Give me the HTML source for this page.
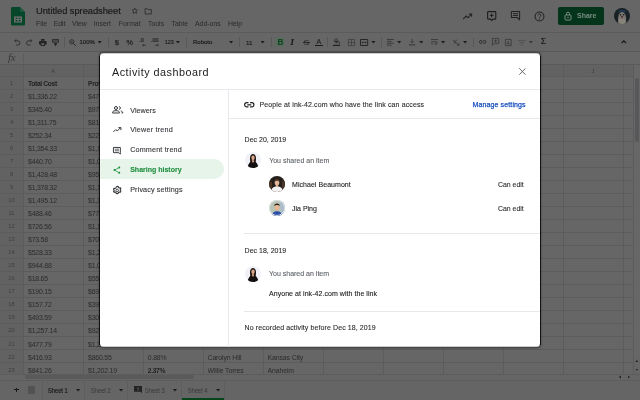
<!DOCTYPE html>
<html lang="en"><head><meta charset="utf-8"><title>Untitled spreadsheet</title>
<style>
*{box-sizing:border-box;margin:0;padding:0}
html,body{width:640px;height:400px;overflow:hidden;background:#666;font-family:"Liberation Sans",sans-serif}
#app{will-change:transform;position:relative;width:640px;height:400px;overflow:hidden;background:#666;color:#222}
.abs{position:absolute}
/* header */
#hdr{position:absolute;left:0;top:0;width:640px;height:32px;background:#666}
#title{position:absolute;left:36px;top:5px;font-size:9.350px;line-height:12px;color:#181818;-webkit-text-stroke:.15px #181818;white-space:nowrap;letter-spacing:-0.05px}
#menu{position:absolute;left:36px;top:18.500px;font-size:6.9px;line-height:10px;color:#2a2a2a;white-space:nowrap}
#menu span{position:absolute;top:0}
#share{position:absolute;left:558px;top:7px;width:46px;height:18px;border-radius:2px;background:#04351b}
#share span{position:absolute;left:19px;top:4px;font-size:7px;line-height:9px;color:#7b8c81;font-weight:bold;letter-spacing:0}
#avatar{position:absolute;left:614px;top:7.600px;width:16px;height:16px;border-radius:50%;overflow:hidden}
/* toolbar */
#tb{position:absolute;left:0;top:32px;width:640px;height:20px;background:#666;box-shadow:inset 0 1px 0 #5b5b5b}
#tb .t{position:absolute;top:5.500px;font-size:6px;line-height:9px;color:#1e1e1e;white-space:nowrap;-webkit-text-stroke:.18px currentColor}
#tb .sep{position:absolute;top:5px;width:1px;height:10px;background:#595959}
#tb .car{position:absolute;top:9px;width:4.200px;height:2.600px;background:#1e1e1e;clip-path:polygon(0 0,100% 0,50% 100%);margin-left:-.2px}
/* formula bar */
#fb{position:absolute;left:0;top:51px;width:640px;height:14px;background:#676767;border-top:1px solid #5a5a5a;border-bottom:1px solid #5a5a5a}
#fb .fx{position:absolute;left:8px;top:-1.500px;font-family:"Liberation Serif",serif;font-style:italic;font-size:11px;line-height:12px;color:#383838;letter-spacing:-.3px}
#fb .sep{position:absolute;left:23px;top:2px;width:1px;height:9px;background:#5c5c5c}
/* grid */
#grid{position:absolute;left:0;top:0;width:640px;height:400px}
#colhead{position:absolute;left:0;top:65px;width:634px;height:12px;background:#626262}
#colhead span{position:absolute;top:0;width:60px;text-align:center;font-size:5.6px;line-height:12px;color:#3c3c3c}
#rowhead{position:absolute;left:0;top:65px;width:23px;height:310px;background:#626262}
#hlines{position:absolute;left:0;top:76px;width:634px;height:300px;background:repeating-linear-gradient(to bottom,#5c5c5c 0,#5c5c5c 1px,transparent 1px,transparent 13px)}
#vlines{position:absolute;left:23px;top:65px;width:611px;height:310px;background:repeating-linear-gradient(to right,#5c5c5c 0,#5c5c5c 1px,transparent 1px,transparent 60px)}
.row{position:absolute;left:0;height:13px;width:640px;font-size:6.900px;letter-spacing:-.2px;line-height:13px;color:#2b2b2b;white-space:nowrap}
.row span{position:absolute;top:0}
.row .rn{left:0;width:23px;text-align:center;font-size:5.800px;letter-spacing:0;color:#3e3e3e}
.row .c{overflow:hidden;width:56px}
.row .ca{left:28px}.row .cb{left:88px}.row .cc{left:147.800px}.row .cd{left:207.500px;letter-spacing:-.1px}.row .ce{left:267.500px;letter-spacing:-.1px}
.row .b{font-weight:bold;color:#222;font-size:6.700px;letter-spacing:-.33px}
/* bottom */
#vscroll{position:absolute;left:633px;top:65px;width:7px;height:310px;background:#676767;border-left:1px solid #5c5c5c}
#vthumb{position:absolute;left:635px;top:77.500px;width:4px;height:64.500px;background:#58585a;border-radius:2px}
#hscroll{position:absolute;left:0;top:374px;width:640px;height:6px;background:#666;border-top:1px solid #5c5c5c}
#hthumb{position:absolute;left:25px;top:375px;width:169px;height:4px;background:#5a5a5c;border-radius:2px}
#bb{position:absolute;left:0;top:380px;width:640px;height:20px;background:#656565;box-shadow:inset 0 1px 0 #5c5c5c}
#bb .tab{position:absolute;top:0;height:20px;font-size:7px;letter-spacing:0;line-height:21.600px;color:#383838;white-space:nowrap;transform:scaleX(.815);transform-origin:0 50%}
#bb .tsep{position:absolute;top:0;width:1px;height:20px;background:#5e5e5e}
#bb .car{position:absolute;top:9px;width:4.200px;height:2.600px;background:#1e1e1e;clip-path:polygon(0 0,100% 0,50% 100%);margin-left:-.2px}
/* dialog */
#shadow{display:none}
#dlg{position:absolute;left:100px;top:53px;width:440px;height:294px;background:#fff;border-radius:3.500px;overflow:hidden;color:#202124;box-shadow:inset 0 .5px 0 rgba(70,70,70,.55),inset 0 -.5px 0 rgba(70,70,70,.55)}
#dlg .h{position:absolute;left:12px;top:12.200px;font-size:10.800px;line-height:14px;color:#202124;letter-spacing:.486px;white-space:nowrap}
#dlg .hl{position:absolute;background:#e6e8eb;height:1px}
#dlg .vl{position:absolute;background:#e6e8eb;width:1px}
#dlg .nav{position:absolute;left:30.200px;font-size:7.200px;line-height:10px;color:#303336;white-space:nowrap;-webkit-text-stroke:.1px currentColor}
#dlg .pill{position:absolute;left:0;top:106.400px;width:124.200px;height:19.800px;background:#e6f4ea;border-radius:0 10px 10px 0}
#dlg .tx{position:absolute;font-size:7px;line-height:10px;color:#2a2c2f;white-space:nowrap;-webkit-text-stroke:.1px currentColor}
#dlg .av{position:absolute;width:16px;height:16px;border-radius:50%;overflow:hidden}
svg{display:block;overflow:visible}
#dshadow{position:absolute;left:100px;top:53px;width:440px;height:294px;border-radius:3.500px;box-shadow:0 .3px 2px .6px rgba(0,0,0,.42)}
#dsl,#dsr{position:absolute;top:55.500px;height:289px;width:.9px;background:rgba(0,0,0,.72)}
#dsl{left:99.200px}#dsr{left:540px}

</style></head>
<body>
<div id="app">
<div id="hdr">
<svg class="abs" style="left:11px;top:6.700px" width="14" height="18.400" viewBox="0 0 14 18.400"><path d="M1.200 0H9l5 5v12.200a1.200 1.200 0 0 1-1.200 1.200H1.200A1.200 1.200 0 0 1 0 17.200V1.200A1.200 1.200 0 0 1 1.200 0z" fill="#06472a"/><path d="M9 0l5 5H10.200A1.200 1.200 0 0 1 9 3.800z" fill="#1d5a3c"/><path d="M3 9.400h8v6.200H3z" fill="#6c6c6c"/><path d="M4.600 10.700h1.700v1.300H4.600zM7.700 10.700h1.700v1.300H7.700zM4.600 13.100h1.700v1.300H4.600zM7.700 13.100h1.700v1.300H7.700z" fill="#06472a"/></svg>
<div id="title">Untitled spreadsheet</div>
<svg class="abs" style="left:131.200px;top:7.300px" width="7.600" height="7.600" viewBox="0 0 24 24"><path d="M12 3.500l2.600 5.600 6.100.700-4.500 4.200 1.200 6-5.400-3-5.400 3 1.200-6-4.500-4.200 6.100-.700z" fill="none" stroke="#2b2b2b" stroke-width="2.600" stroke-linejoin="round"/></svg>
<svg class="abs" style="left:143.800px;top:6.800px" width="8.400" height="8.400" viewBox="0 0 24 24"><path d="M3 5h7l2 2.500h9V20H3z" fill="none" stroke="#2b2b2b" stroke-width="2.400" stroke-linejoin="round"/></svg>
<div id="menu"><span style="left:0">File</span><span style="left:17.700px">Edit</span><span style="left:36px">View</span><span style="left:57.700px">Insert</span><span style="left:82.800px">Format</span><span style="left:112px">Tools</span><span style="left:135.500px">Table</span><span style="left:159px">Add-ons</span><span style="left:192px">Help</span></div>
<!-- right icons -->
<svg class="abs" style="left:462px;top:11px" width="11" height="11" viewBox="0 0 24 24"><path d="M2.500 17.500l6.500-6.500 4 4 7.500-8M15 6.500h6v6" fill="none" stroke="#222" stroke-width="2.200"/></svg>
<svg class="abs" style="left:486.800px;top:10.800px" width="9.400" height="10.400" viewBox="0 0 18.800 20.800"><path d="M2.500 1.200h13.800a1.300 1.300 0 0 1 1.300 1.300v12.500a1.300 1.300 0 0 1-1.300 1.300h-4.400l-2.500 3-2.500-3H2.500a1.300 1.300 0 0 1-1.300-1.300V2.500a1.300 1.300 0 0 1 1.300-1.300z" fill="none" stroke="#1e1e1e" stroke-width="2.200" stroke-linejoin="round"/><path d="M9.400 5v7.400M5.700 8.700h7.400" stroke="#1e1e1e" stroke-width="2"/></svg>
<svg class="abs" style="left:510px;top:10.200px" width="11" height="11" viewBox="0 0 24 24"><path d="M3 3.500h18v13H21v5l-5-5H3z" fill="none" stroke="#222" stroke-width="2.200" stroke-linejoin="round"/><path d="M6.500 8h11M6.500 12h11" stroke="#222" stroke-width="2"/></svg>
<svg class="abs" style="left:534.100px;top:10.500px" width="11" height="11" viewBox="0 0 24 24"><circle cx="12" cy="12" r="9.700" fill="none" stroke="#222" stroke-width="2.300"/><path d="M9 9.500a3 3 0 1 1 4.500 2.600c-1 .600-1.500 1.200-1.500 2.400" fill="none" stroke="#222" stroke-width="2"/><circle cx="12" cy="17.500" r="1.300" fill="#222"/></svg>
<div id="share"><svg class="abs" style="left:5.500px;top:4px" width="8" height="10" viewBox="0 0 16 20"><rect x="2" y="8" width="12" height="10" rx="1.500" fill="none" stroke="#7b8c81" stroke-width="2"/><path d="M5 8V5.500a3 3 0 0 1 6 0V8" fill="none" stroke="#7b8c81" stroke-width="2"/><circle cx="8" cy="13" r="1.500" fill="#7b8c81"/></svg><span>Share</span></div>
<div id="avatar"><svg width="16" height="16" viewBox="0 0 16 16"><rect width="16" height="16" fill="#1a2226"/><path d="M3.800 4.300C5 1.200 11.400 1.200 12.400 4.300 10 3.200 6 3.200 3.800 4.300z" fill="#1f3f66"/><path d="M4.300 16C3.500 9 4.500 4 8 4s4.800 5 3.900 12z" fill="#77756f"/><ellipse cx="8" cy="13" rx="3.300" ry="3.500" fill="#86837a"/><circle cx="6.500" cy="6.700" r=".75" fill="#1a1a1a"/><circle cx="9.600" cy="6.700" r=".75" fill="#1a1a1a"/><ellipse cx="8" cy="8.300" rx=".8" ry=".6" fill="#222"/><ellipse cx="8.100" cy="9.800" rx=".8" ry="1.100" fill="#7a3540"/></svg></div>
</div>
<div id="tb">
<!-- undo redo print paint -->
<svg class="abs" style="left:13.500px;top:6.500px" width="6.500" height="7" viewBox="0 0 13 14"><path d="M4.500 0.500L1.500 3.500 4.500 6.500" fill="none" stroke="#262626" stroke-width="1.600"/><path d="M2 3.500h5.500a4.300 4.300 0 0 1 0 8.600H4" fill="none" stroke="#262626" stroke-width="1.600"/></svg>
<svg class="abs" style="left:26px;top:6.500px" width="6.500" height="7" viewBox="0 0 13 14"><path d="M8.500 0.500l3 3-3 3" fill="none" stroke="#262626" stroke-width="1.600"/><path d="M11 3.500H5.500a4.300 4.300 0 0 0 0 8.600H9" fill="none" stroke="#262626" stroke-width="1.600"/></svg>
<svg class="abs" style="left:38.800px;top:6.500px" width="7.600" height="7" viewBox="0 0 15.200 14"><path d="M4 0h7.200v3.500H4zM1.500 4h12.200a1.500 1.500 0 0 1 1.500 1.500v5.500h-3v3H3v-3H0V5.500A1.500 1.500 0 0 1 1.500 4z" fill="#242424"/><rect x="5" y="8.500" width="5.200" height="3.500" fill="#666"/></svg>
<svg class="abs" style="left:52px;top:6.500px" width="7" height="7.200" viewBox="0 0 14 14.400"><path d="M1 1h12v5.500H1z" fill="none" stroke="#262626" stroke-width="1.700"/><path d="M1 3.700h12" stroke="#262626" stroke-width="1.300"/><path d="M4.500 8h5v2.500L7 14.400 4.500 10.500z" fill="#262626"/></svg>
<div class="sep" style="left:64px"></div>
<svg class="abs" style="left:69px;top:6.500px" width="7.200" height="7.200" viewBox="0 0 14.400 14.400"><circle cx="5.500" cy="5.500" r="4.300" fill="none" stroke="#262626" stroke-width="1.600"/><path d="M8.800 8.800l5 5" stroke="#262626" stroke-width="1.900"/><path d="M3.500 5.500h4M5.500 3.500v4" stroke="#262626" stroke-width="1.100"/></svg>
<div class="t" style="left:79.500px">100%</div><div class="car" style="left:97.800px"></div>
<div class="sep" style="left:108px"></div>
<div class="t" style="left:114.800px;font-size:7.600px">$</div>
<div class="t" style="left:126.500px;font-size:7.200px">%</div>
<div class="t" style="left:139.300px;font-size:5.400px;top:3.500px">.0</div><svg class="abs" style="left:141.500px;top:12px" width="4" height="2.400" viewBox="0 0 8 4.800"><path d="M8 2.400H1.500M3.500 .4L1.200 2.400l2.300 2" fill="none" stroke="#222" stroke-width="1.300"/></svg>
<div class="t" style="left:151px;font-size:5.400px;top:3.500px">.00</div><svg class="abs" style="left:154.500px;top:12px" width="4" height="2.400" viewBox="0 0 8 4.800"><path d="M0 2.400h6.500M4.500 .4l2.300 2-2.300 2" fill="none" stroke="#222" stroke-width="1.300"/></svg>
<div class="t" style="left:164.800px;font-size:5.400px">123</div><div class="car" style="left:176px"></div>
<div class="sep" style="left:186px"></div>
<div class="t" style="left:193px">Roboto</div><div class="car" style="left:229.200px"></div>
<div class="sep" style="left:239px"></div>
<div class="t" style="left:246px;font-size:6.200px">11</div><div class="car" style="left:260.700px"></div>
<div class="sep" style="left:270.500px"></div>
<div class="abs" style="left:274.400px;top:4.500px;width:11px;height:10.700px;border-radius:1.500px;background:#5e695f"></div>
<div class="t" style="left:277.500px;top:5.500px;font-size:8.200px;font-weight:bold;color:#0b4a20">B</div>
<div class="t" style="left:290.500px;top:5.500px;font-size:8.600px;font-style:italic;font-family:'Liberation Serif',serif;font-weight:bold;color:#1c1c1c">I</div>
<div class="t" style="left:303.800px;top:5.500px;font-size:8px;color:#2c2c2c">S</div><div class="abs" style="left:303px;top:9.800px;width:7px;height:0.900px;background:#262626"></div>
<div class="t" style="left:316.500px;top:4.800px;font-size:7px;color:#222">A</div><div class="abs" style="left:315.200px;top:13px;width:7.700px;height:1.200px;background:#1a1a1a"></div>
<div class="sep" style="left:327px"></div>
<svg class="abs" style="left:333px;top:6.200px" width="7.200" height="8" viewBox="0 0 14.400 16"><path d="M6 0.800l5 5-4.200 4.200-4.800-4.800z" fill="none" stroke="#262626" stroke-width="1.500" stroke-linejoin="round"/><path d="M2.500 5.500h8.300l-4 4.500z" fill="#262626"/><path d="M12.800 7.500c.9 1.300 1.400 2 1.400 2.700a1.400 1.400 0 0 1-2.800 0c0-.700.500-1.400 1.400-2.700z" fill="#262626"/><rect x="0" y="13.600" width="14.400" height="2.200" fill="#1a1a1a"/></svg>
<svg class="abs" style="left:347.500px;top:6.500px" width="7" height="7" viewBox="0 0 14 14"><path d="M.8.800h12.400v12.400H.8zM.8 7h12.400M7 .8v12.400" fill="none" stroke="#3a3a3a" stroke-width="1.400"/></svg>
<svg class="abs" style="left:359.800px;top:6.500px" width="8.200" height="7" viewBox="0 0 16.400 14"><path d="M1 1h14.400v12H1z" fill="none" stroke="#222" stroke-width="1.900"/><path d="M4 7h8.400M5.700 5.200L3.900 7l1.800 1.800M10.700 5.200l1.800 1.800-1.800 1.800" fill="none" stroke="#222" stroke-width="1.300"/></svg>
<div class="car" style="left:371.500px"></div>
<div class="sep" style="left:381px"></div>
<svg class="abs" style="left:386.500px;top:7px" width="6.800" height="6.600" viewBox="0 0 13.600 13.200"><path d="M0 .9h13.600M0 4.700h9M0 8.500h13.600M0 12.300h9" stroke="#303030" stroke-width="1.600"/></svg>
<div class="car" style="left:397.300px"></div>
<svg class="abs" style="left:409px;top:6.800px" width="6.200" height="6.400" viewBox="0 0 12.400 12.800"><path d="M6.200 0v7.500M3.200 4.700l3 3 3-3" fill="none" stroke="#303030" stroke-width="1.500"/><path d="M0 11.800h12.400" stroke="#262626" stroke-width="1.600"/></svg>
<div class="car" style="left:419.400px"></div>
<svg class="abs" style="left:430.600px;top:7.300px" width="7" height="6" viewBox="0 0 14 12"><path d="M0 1h14M0 9.800h4M0 5.400h10.500a2.200 2.200 0 0 1 0 4.400H8" fill="none" stroke="#303030" stroke-width="1.500"/><path d="M9 7.800L6.800 9.800 9 11.800z" fill="#303030"/></svg>
<div class="car" style="left:441.200px"></div>
<svg class="abs" style="left:453px;top:6.800px" width="6.500" height="6.800" viewBox="0 0 13 13.600"><path d="M.8 1.500l3 7 3-7" fill="none" stroke="#303030" stroke-width="1.600"/><path d="M6 7.500l5.500 4.500M12 8.500v4H8" fill="none" stroke="#303030" stroke-width="1.500"/></svg>
<div class="car" style="left:463.200px"></div>
<div class="sep" style="left:473px"></div>
<svg class="abs" style="left:478.700px;top:8px" width="7.400" height="3.800" viewBox="0 0 14.800 7.600"><path d="M6 .9H3.800a2.900 2.900 0 0 0 0 5.800H6M8.800 .9H11a2.900 2.900 0 0 1 0 5.800H8.800M4.500 3.800h5.800" fill="none" stroke="#262626" stroke-width="1.500"/></svg>
<svg class="abs" style="left:492px;top:6.200px" width="7.200" height="7.400" viewBox="0 0 14.400 14.800"><path d="M.8.800h12.800v10.500H4.300L.8 14.500z" fill="none" stroke="#303030" stroke-width="1.400" stroke-linejoin="round"/><path d="M7.200 3v6.200M4.100 6.100h6.200" stroke="#303030" stroke-width="1.400"/></svg>
<svg class="abs" style="left:505.200px;top:6.500px" width="6.600" height="7" viewBox="0 0 13.200 14"><path d="M.8.800h11.600v12.400H.8z" fill="none" stroke="#303030" stroke-width="1.400"/><path d="M4.300 10.500V6.500M6.600 10.500V3.500M8.900 10.500V8" stroke="#303030" stroke-width="1.300"/></svg>
<svg class="abs" style="left:518px;top:7.500px" width="7.600" height="5.400" viewBox="0 0 15.200 10.800"><path d="M0 1h15.200M3 5.400h9.200M6 9.800h3.200" stroke="#505050" stroke-width="1.900"/></svg>
<div class="car" style="left:529px;background:#3a3a3a"></div>
<div class="t" style="left:540.800px;top:5px;font-size:8.400px;color:#1a1a1a">Σ</div>
<svg class="abs" style="left:620.500px;top:7.500px" width="5.600" height="3.600" viewBox="0 0 11.200 7.200"><path d="M1 6.300l4.600-4.600 4.600 4.600" fill="none" stroke="#161616" stroke-width="2.500"/></svg>
</div>
<div id="fb"><span class="fx">fx</span><div class="sep"></div></div>

<div id="grid">
<div id="colhead"><span style="left:23px">A</span><span style="left:563px">J</span></div>
<div id="rowhead"></div>
<div id="hlines"></div>
<div id="vlines"></div>
<div class="row" style="top:77.0px"><span class="rn">1</span><span class="c ca b">Total Cost</span><span class="c cb b">Profit</span></div>
<div class="row" style="top:90.03px"><span class="rn">2</span><span class="c ca">$1,336.22</span><span class="c cb">$475.20</span></div>
<div class="row" style="top:103.05px"><span class="rn">3</span><span class="c ca">$345.40</span><span class="c cb">$975.10</span></div>
<div class="row" style="top:116.08px"><span class="rn">4</span><span class="c ca">$1,311.75</span><span class="c cb">$815.33</span></div>
<div class="row" style="top:129.1px"><span class="rn">5</span><span class="c ca">$252.34</span><span class="c cb">$225.48</span></div>
<div class="row" style="top:142.13px"><span class="rn">6</span><span class="c ca">$1,354.33</span><span class="c cb">$1,154.20</span></div>
<div class="row" style="top:155.16px"><span class="rn">7</span><span class="c ca">$440.70</span><span class="c cb">$1,045.11</span></div>
<div class="row" style="top:168.18px"><span class="rn">8</span><span class="c ca">$1,428.48</span><span class="c cb">$955.70</span></div>
<div class="row" style="top:181.21px"><span class="rn">9</span><span class="c ca">$1,378.32</span><span class="c cb">$1,132.40</span></div>
<div class="row" style="top:194.23px"><span class="rn">10</span><span class="c ca">$1,495.12</span><span class="c cb">$1,325.16</span></div>
<div class="row" style="top:207.26px"><span class="rn">11</span><span class="c ca">$488.46</span><span class="c cb">$775.25</span></div>
<div class="row" style="top:220.29px"><span class="rn">12</span><span class="c ca">$726.56</span><span class="c cb">$1,184.30</span></div>
<div class="row" style="top:233.31px"><span class="rn">13</span><span class="c ca">$73.58</span><span class="c cb">$705.12</span></div>
<div class="row" style="top:246.34px"><span class="rn">14</span><span class="c ca">$528.33</span><span class="c cb">$1,245.60</span></div>
<div class="row" style="top:259.36px"><span class="rn">15</span><span class="c ca">$944.88</span><span class="c cb">$1,048.22</span></div>
<div class="row" style="top:272.39px"><span class="rn">16</span><span class="c ca">$18.65</span><span class="c cb">$555.91</span></div>
<div class="row" style="top:285.42px"><span class="rn">17</span><span class="c ca">$190.15</span><span class="c cb">$695.34</span></div>
<div class="row" style="top:298.44px"><span class="rn">18</span><span class="c ca">$157.72</span><span class="c cb">$395.18</span></div>
<div class="row" style="top:311.47px"><span class="rn">19</span><span class="c ca">$493.59</span><span class="c cb">$305.77</span></div>
<div class="row" style="top:324.49px"><span class="rn">20</span><span class="c ca">$1,257.14</span><span class="c cb">$925.46</span></div>
<div class="row" style="top:337.52px"><span class="rn">21</span><span class="c ca">$477.79</span><span class="c cb">$1,250.31</span></div>
<div class="row" style="top:350.55px"><span class="rn">22</span><span class="c ca">$416.93</span><span class="c cb">$860.55</span><span class="c cc">0.88%</span><span class="c cd">Carolyn Hill</span><span class="c ce">Kansas City</span></div>
<div class="row" style="top:363.57px"><span class="rn">23</span><span class="c ca">$841.26</span><span class="c cb">$1,202.19</span><span class="c cc b">2.37%</span><span class="c cd">Willie Torres</span><span class="c ce">Anaheim</span></div>
</div>
<div id="vscroll"></div><div id="vthumb"></div>
<div class="abs" style="left:633px;top:357px;width:7px;height:17px;background:#666;border-left:1px solid #5c5c5c"></div>
<div class="abs" style="left:635.200px;top:360px;width:3.400px;height:2.200px;background:#262626;clip-path:polygon(0 100%,100% 100%,50% 0)"></div>
<div class="abs" style="left:635.200px;top:368.600px;width:3.400px;height:2.200px;background:#262626;clip-path:polygon(0 0,100% 0,50% 100%)"></div>
<div id="hscroll"></div><div id="hthumb"></div>
<div class="abs" style="left:618.800px;top:375.400px;width:2.200px;height:3.400px;background:#262626;clip-path:polygon(100% 0,100% 100%,0 50%)"></div>
<div class="abs" style="left:627.800px;top:375.400px;width:2.200px;height:3.400px;background:#262626;clip-path:polygon(0 0,0 100%,100% 50%)"></div>
<div id="bb">
<div class="abs" style="left:14.300px;top:9.200px;width:4.400px;height:1px;background:#1a1a1a"></div><div class="abs" style="left:16px;top:7.500px;width:1px;height:4.400px;background:#1a1a1a"></div>
<div class="abs" style="left:28px;top:6px;width:7.200px;height:7.800px;background:#525252"></div>
<div class="tsep" style="left:41.800px"></div>
<div class="tab" style="left:48px;color:#1a1a1a;-webkit-text-stroke:.2px #1a1a1a">Sheet 1</div><div class="car" style="left:76.200px"></div>
<div class="tsep" style="left:83.800px"></div>
<div class="tab" style="left:91px">Sheet 2</div><div class="car" style="left:119.200px"></div>
<div class="tsep" style="left:126.800px"></div>
<svg class="abs" style="left:134px;top:6.400px" width="8" height="7.300" viewBox="0 0 16 14.600"><path d="M0 0h16v14.600l-3-3H0z" fill="#232323"/><path d="M6.800 4.200l1.600-1v5.600" fill="none" stroke="#777" stroke-width="1.300"/></svg>
<div class="tab" style="left:145px">Sheet 3</div><div class="car" style="left:173px"></div>
<div class="tsep" style="left:181px"></div>
<div class="tab" style="left:187.500px;letter-spacing:-.03px">Sheet 4</div><div class="car" style="left:216.200px"></div>
<div class="tsep" style="left:223.600px"></div>
<div class="abs" style="left:181.500px;top:17.800px;width:42.200px;height:2.200px;background:#06451a"></div>
</div>

<div id="dshadow"></div><div id="dsl"></div><div id="dsr"></div>
<div id="dlg">
<div class="h">Activity dashboard</div>
<svg class="abs" style="left:418.700px;top:15px" width="6.800" height="7" viewBox="0 0 6.800 7"><path d="M.3.300l6.200 6.400M6.500.300L.3 6.700" stroke="#5f6368" stroke-width=".95"/></svg>
<div class="hl" style="left:0;top:36px;width:440px"></div>
<div class="vl" style="left:128px;top:37px;height:257px"></div>
<div class="pill"></div>
<!-- nav icons -->
<svg class="abs" style="left:12.200px;top:53.300px" width="11.200" height="7.600" viewBox="0 0 22.400 15.200"><circle cx="8" cy="4" r="3" fill="none" stroke="#303336" stroke-width="2"/><path d="M1 14v-1.200c0-2.300 4-3.500 7-3.500s7 1.200 7 3.500V14z" fill="none" stroke="#303336" stroke-width="2" stroke-linejoin="round"/><path d="M14.500 1.100a3 3 0 0 1 0 5.800M17.500 9.800c2 .600 3.900 1.600 3.900 3V14H19" fill="none" stroke="#303336" stroke-width="2"/></svg>
<svg class="abs" style="left:12.800px;top:74px" width="8.400" height="5.600" viewBox="0 0 16.800 11.200"><path d="M.8 9.800l4.700-4.700 3 3 6.500-6.700M10.800 1.200h5v5" fill="none" stroke="#303336" stroke-width="1.900"/></svg>
<svg class="abs" style="left:13px;top:93.600px" width="7.800" height="7.600" viewBox="0 0 15.600 15.200"><path d="M.9.900h13.800v10.400v3l-3-3H.9z" fill="none" stroke="#303336" stroke-width="1.900" stroke-linejoin="round"/><path d="M3.600 4.400h8.400M3.600 7.600h8.400" stroke="#303336" stroke-width="1.500"/></svg>
<svg class="abs" style="left:13.300px;top:112.600px" width="7.800" height="8.200" viewBox="0 0 15.600 16.400"><circle cx="12.500" cy="3" r="2" fill="#1e8e3e"/><circle cx="3" cy="8.200" r="2" fill="#1e8e3e"/><circle cx="12.500" cy="13.400" r="2" fill="#1e8e3e"/><path d="M12.500 3L3 8.200l9.500 5.200" fill="none" stroke="#1e8e3e" stroke-width="1.500"/></svg>
<svg class="abs" style="left:12.900px;top:132.800px" width="8.400" height="8.400" viewBox="0.800 0.800 18.400 18.400"><path d="M10 1.500l2 .3.800 2.300 1.700 1 2.400-.5 1.300 2-1.500 1.900v2l1.500 1.900-1.300 2-2.400-.5-1.700 1-.8 2.300-2 .3-2-.3-.8-2.300-1.700-1-2.400.5-1.300-2L3.300 11.500v-2L1.800 7.600l1.300-2 2.400.5 1.700-1L8 2.800z" fill="none" stroke="#303336" stroke-width="2.300" stroke-linejoin="round"/><circle cx="10" cy="10.500" r="2.700" fill="none" stroke="#303336" stroke-width="2"/></svg>
<div class="nav" style="top:52.5px;letter-spacing:.045px">Viewers</div>
<div class="nav" style="top:72.4px;letter-spacing:.21px">Viewer trend</div>
<div class="nav" style="top:92.3px;letter-spacing:.17px">Comment trend</div>
<div class="nav" style="top:112.2px;color:#1e8e3e;font-weight:bold;font-size:7px">Sharing history</div>
<div class="nav" style="top:132.1px;letter-spacing:.136px">Privacy settings</div>
<!-- right pane -->
<svg class="abs" style="left:144.200px;top:48.700px" width="10.600" height="5.600" viewBox="0 0 21.200 11.200"><path d="M9 1.300H5.600a4.300 4.300 0 0 0 0 8.600H9M12.200 1.300h3.400a4.300 4.300 0 0 1 0 8.600h-3.400M6.600 5.600h8" fill="none" stroke="#202124" stroke-width="2.400"/></svg>
<div class="tx" style="left:159.500px;top:47.1px;letter-spacing:.12px">People at ink-42.com who have the link can access</div>
<div class="tx" style="left:372.500px;top:47.1px;color:#1a50c0;letter-spacing:.125px;-webkit-text-stroke:.25px #1a50c0">Manage settings</div>
<div class="hl" style="left:128px;top:65px;width:312px"></div>
<div class="tx" style="left:144.600px;top:81.6px">Dec 20, 2019</div>
<div class="av" style="left:144.500px;top:99px"><svg width="16" height="16" viewBox="0 0 16 16"><rect width="16" height="16" fill="#f1f2f8"/><path d="M5.300 9.500C4.200 4.500 5.800 2 8 2s3.800 2.500 2.700 7.500l1.300 2.500H4z" fill="#241815"/><ellipse cx="8" cy="5.800" rx="1.700" ry="2.200" fill="#d8a68a"/><path d="M7.200 7.500h1.600v2.500H7.200z" fill="#d8a68a"/><path d="M2.600 16c.2-4.200 2.400-5.800 5.400-5.800s5.200 1.600 5.400 5.800z" fill="#141010"/><path d="M7 9.600l1 1.500 1-1.500z" fill="#d8a68a"/></svg></div>
<div class="tx" style="left:169.200px;top:102.6px;color:#5f6368">You shared an item</div>
<div class="av" style="left:168.700px;top:122.800px"><svg width="16" height="16" viewBox="0 0 16 16"><rect width="16" height="16" fill="#26201d"/><path d="M0 6h3v6H0zM13 5h3v7h-3z" fill="#4a3526"/><ellipse cx="8" cy="6.600" rx="2.300" ry="2.900" fill="#e3b99e"/><path d="M5.600 5.800C5.200 2.800 10.800 2.800 10.400 5.800 9.600 4.600 6.400 4.600 5.600 5.800z" fill="#6a4a30"/><path d="M6.800 8.800h2.400v2H6.800z" fill="#dcae92"/><path d="M2 16c.2-4 2.500-5.600 6-5.600s5.800 1.600 6 5.600z" fill="#f4f3f2"/></svg></div>
<div class="tx" style="left:192px;top:126.8px;letter-spacing:.05px;color:#202124">Michael Beaumont</div>
<div class="tx" style="left:398px;top:126.7px;font-size:6.900px">Can edit</div>
<div class="av" style="left:168.700px;top:147px"><svg width="16" height="16" viewBox="0 0 16 16"><rect width="16" height="16" fill="#b9c3b6"/><path d="M11 0h5v16h-4z" fill="#a9bccb"/><ellipse cx="8" cy="7" rx="2.500" ry="3.100" fill="#e4b696"/><path d="M5.300 6.300C4.900 2.600 11.100 2.600 10.700 6.300 9.800 4.700 6.200 4.700 5.300 6.300z" fill="#1f1917"/><path d="M6.900 9.500h2.200v2H6.900z" fill="#dcae90"/><path d="M3 16c.2-3.400 2.300-4.800 5-4.800s4.800 1.400 5 4.800z" fill="#2c4fa8"/><circle cx="8" cy="8" r="7.500" fill="none" stroke="#dfe3e6" stroke-width="1"/></svg></div>
<div class="tx" style="left:192px;top:150.8px;color:#202124">Jia Ping</div>
<div class="tx" style="left:398px;top:151.0px;font-size:6.900px">Can edit</div>
<div class="hl" style="left:144px;top:180px;width:296px"></div>
<div class="tx" style="left:144.600px;top:193.2px">Dec 18, 2019</div>
<div class="av" style="left:144.800px;top:212.800px"><svg width="16" height="16" viewBox="0 0 16 16"><rect width="16" height="16" fill="#f1f2f8"/><path d="M5.300 9.500C4.200 4.500 5.800 2 8 2s3.800 2.500 2.700 7.500l1.300 2.500H4z" fill="#241815"/><ellipse cx="8" cy="5.800" rx="1.700" ry="2.200" fill="#d8a68a"/><path d="M7.200 7.500h1.600v2.500H7.200z" fill="#d8a68a"/><path d="M2.600 16c.2-4.200 2.400-5.800 5.400-5.800s5.200 1.600 5.400 5.800z" fill="#141010"/><path d="M7 9.600l1 1.500 1-1.500z" fill="#d8a68a"/></svg></div>
<div class="tx" style="left:169px;top:216.1px;color:#5f6368">You shared an item</div>
<div class="tx" style="left:169px;top:236.1px;letter-spacing:.055px;color:#202124">Anyone at ink-42.com with the link</div>
<div class="hl" style="left:144px;top:258px;width:296px"></div>
<div class="tx" style="left:144.600px;top:269.8px;letter-spacing:.1px">No recorded activity before Dec 18, 2019</div>
</div>

</div>
</body></html>
